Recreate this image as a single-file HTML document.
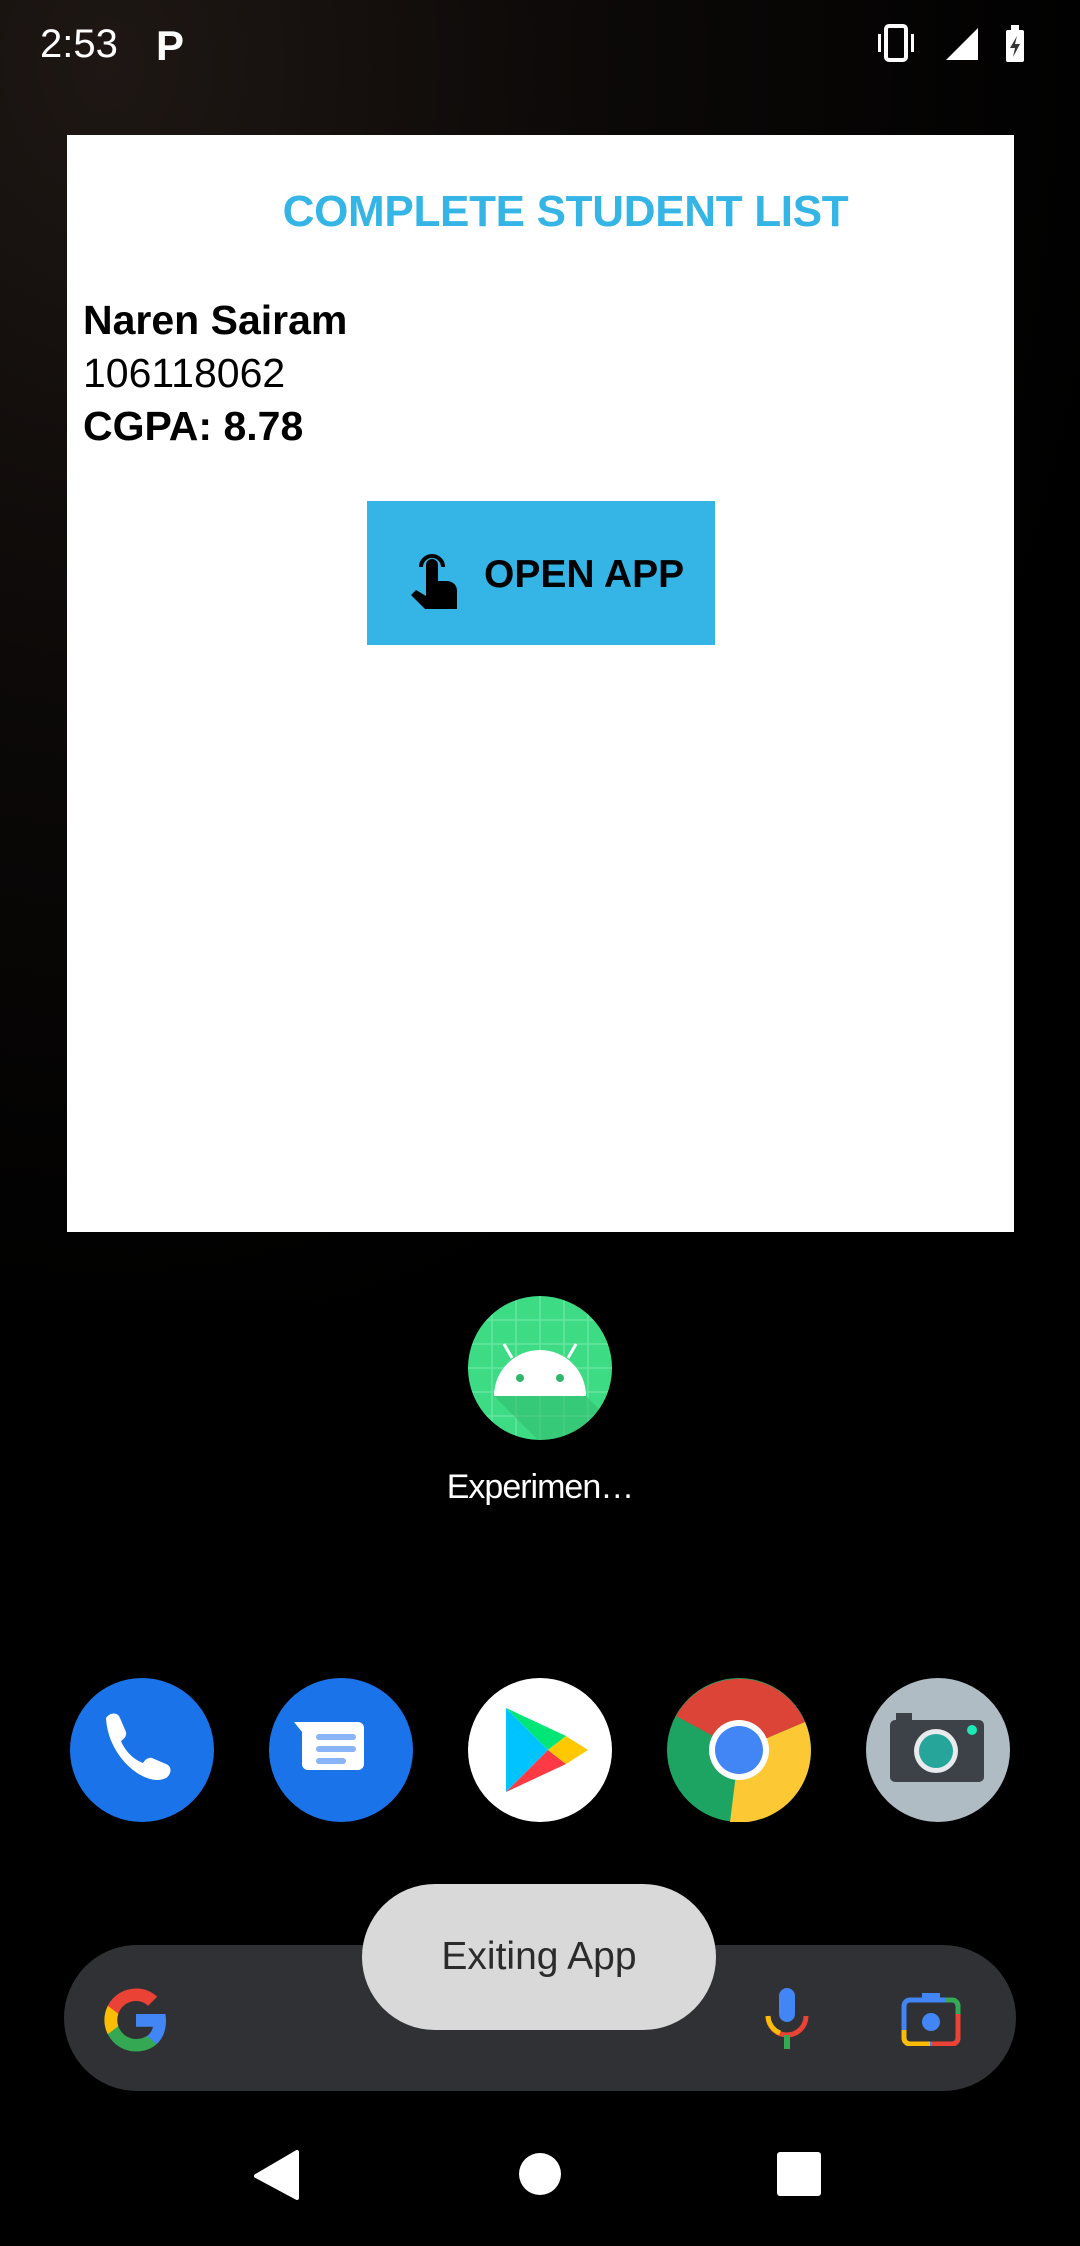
<!DOCTYPE html>
<html><head><meta charset="utf-8"><style>
*{margin:0;padding:0;box-sizing:border-box}
body{width:1080px;height:2246px;background:#000;position:relative;overflow:hidden;font-family:"Liberation Sans",sans-serif}
.bg{position:absolute;left:0;top:0;width:1080px;height:1300px;background:radial-gradient(ellipse at 10% 5%,#1e1714 0%,#0c0908 35%,#000 75%)}
.abs{position:absolute}
.widget{left:67px;top:135px;width:947px;height:1097px;background:#fff}
.title{left:0;width:947px;text-align:center;top:52px;padding-left:50px;color:#35b5e5;font-weight:bold;font-size:44px;letter-spacing:-0.3px}
.t{left:16px;font-size:41px;color:#000}
.btn{left:300px;top:366px;width:348px;height:144px;background:#35b5e5}
</style></head><body>
<div class="bg"></div>
<div class="abs" style="left:40px;top:22px;color:#fff;font-size:40px">2:53</div>
<div class="abs" style="left:156px;top:22px;color:#fff;font-size:42px;font-weight:bold">P</div>
<svg class="abs" style="left:876px;top:22px" width="160" height="44" viewBox="0 0 160 44">
<rect x="10" y="4" width="20" height="34" rx="3" fill="none" stroke="#fff" stroke-width="4"/>
<rect x="2" y="12" width="3" height="18" fill="#fff"/><rect x="35" y="12" width="3" height="18" fill="#fff"/>
<polygon points="70,38 102,38 102,6" fill="#fff"/>
<rect x="130" y="8" width="18" height="32" rx="2" fill="#fff"/><rect x="135" y="3" width="8" height="6" fill="#fff"/>
<polygon points="141,14 134,26 139,26 137,35 144,22 139,22" fill="#333"/>
</svg>
<div class="abs widget">
<div class="abs title">COMPLETE STUDENT LIST</div>
<div class="abs t" style="top:162px;font-weight:bold">Naren Sairam</div>
<div class="abs t" style="top:215px">106118062</div>
<div class="abs t" style="top:268px;font-weight:bold">CGPA: 8.78</div>
<div class="abs btn">
<svg class="abs" style="left:42px;top:42px" width="50" height="66" viewBox="0 0 50 66">
<path d="M12 24a11 11 0 1 1 22 0" fill="none" stroke="#000" stroke-width="4"/>
<path d="M17 22a6 6 0 0 1 12 0v16h8c7 0 11 4 11 10v18H16L2 52l5-5 10 6z" fill="#000"/>
</svg>
<div class="abs" style="left:117px;top:52px;font-size:39px;font-weight:bold;color:#000">OPEN APP</div>
</div>
</div>
<svg class="abs" style="left:468px;top:1296px" width="144" height="144" viewBox="0 0 144 144">
<defs><clipPath id="c"><circle cx="72" cy="72" r="72"/></clipPath></defs>
<circle cx="72" cy="72" r="72" fill="#3ddc84"/>
<g clip-path="url(#c)" stroke="#7be8ad" stroke-width="1.5" opacity=".7">
<path d="M0 24H144M0 48H144M0 72H144M0 96H144M0 120H144M24 0V144M48 0V144M72 0V144M96 0V144M120 0V144"/></g>
<polygon clip-path="url(#c)" points="26,100 118,100 144,126 144,144 70,144" fill="#2fb86c" opacity=".5"/>
<path d="M26 100a46 46 0 0 1 92 0z" fill="#fff"/>
<path d="M44 62l-8-14M100 62l8-14" stroke="#fff" stroke-width="3"/>
<circle cx="52" cy="82" r="4" fill="#2fb86c"/><circle cx="92" cy="82" r="4" fill="#2fb86c"/>
</svg>
<div class="abs" style="left:0;width:1080px;text-align:center;top:1468px;color:#fff;font-size:34px;letter-spacing:-1px">Experimen…</div>
<svg class="abs" style="left:70px;top:1678px" width="944" height="144" viewBox="0 0 944 144">
<circle cx="72" cy="72" r="72" fill="#1a73e8"/>
<path d="M36 40c4-6 12-6 14 0l6 14c1 4-2 7-5 9 4 10 12 18 22 22 2-3 5-6 9-5l14 6c6 2 6 10 0 14-20 10-58-20-60-60z" fill="#fff"/>
<circle cx="271" cy="72" r="72" fill="#1a73e8"/>
<path d="M224 44h64a6 6 0 0 1 6 6v36a6 6 0 0 1-6 6h-50a6 6 0 0 1-6-6v-32z" fill="#fff"/>
<rect x="246" y="56" width="40" height="6" rx="3" fill="#8ab4f8"/><rect x="246" y="68" width="40" height="6" rx="3" fill="#8ab4f8"/><rect x="246" y="80" width="30" height="6" rx="3" fill="#8ab4f8"/>
<circle cx="470" cy="72" r="72" fill="#fff"/>
<polygon points="436,30 436,114 478,72" fill="#00c3ff"/>
<polygon points="436,30 478,72 496,58" fill="#00e676"/>
<polygon points="436,114 478,72 496,86" fill="#ff3a44"/>
<polygon points="478,72 496,58 518,72 496,86" fill="#ffc800"/>
<circle cx="669" cy="72" r="72" fill="#1da462"/>
<path d="M669 72L606 38A72 72 0 0 1 735 44z" fill="#db4437"/>
<path d="M669 72L735 44A72 72 0 0 1 660 144z" fill="#fcc934"/>
<circle cx="669" cy="72" r="30" fill="#fff"/><circle cx="669" cy="72" r="24" fill="#4285f4"/>
<circle cx="868" cy="72" r="72" fill="#b0bcc3"/>
<rect x="820" y="42" width="94" height="62" rx="5" fill="#3c4248"/><rect x="826" y="35" width="16" height="8" fill="#3c4248"/>
<circle cx="866" cy="73" r="22" fill="#e8eaed"/><circle cx="866" cy="73" r="17" fill="#26a69a"/>
<circle cx="902" cy="52" r="5" fill="#1de9b6"/>
</svg>
<div class="abs" style="left:64px;top:1945px;width:952px;height:146px;border-radius:73px;background:#2f3134"></div>
<svg class="abs" style="left:100px;top:1984px" width="72" height="72" viewBox="0 0 48 48">
<path d="M44 24.5c0-1.5-.1-3-.4-4.5H24v8.5h11.3a9.6 9.6 0 0 1-4.2 6.3v5.2h6.8c4-3.7 6.1-9.1 6.1-15.5z" fill="#4285f4"/>
<path d="M24 45c5.7 0 10.5-1.9 13.9-5.1l-6.8-5.2c-1.9 1.3-4.3 2-7.1 2-5.5 0-10.1-3.7-11.8-8.6H5.2v5.4A21 21 0 0 0 24 45z" fill="#34a853"/>
<path d="M12.2 28.1a12.6 12.6 0 0 1 0-8.2v-5.4h-7a21 21 0 0 0 0 19z" fill="#fbbc05"/>
<path d="M24 11.3c3.1 0 5.9 1.1 8.1 3.2l6-6A20 20 0 0 0 24 3 21 21 0 0 0 5.2 14.5l7 5.4C13.9 15 18.5 11.3 24 11.3z" fill="#ea4335"/>
</svg>
<svg class="abs" style="left:762px;top:1986px" width="50" height="66" viewBox="0 0 50 66">
<rect x="17" y="2" width="16" height="34" rx="8" fill="#4285f4"/>
<path d="M6 30a19 19 0 0 0 38 0" fill="none" stroke="#ea4335" stroke-width="5"/>
<path d="M6 30a19 19 0 0 0 12 17" fill="none" stroke="#fbbc05" stroke-width="5"/>
<rect x="22" y="49" width="6" height="14" fill="#34a853"/>
</svg>
<svg class="abs" style="left:900px;top:1990px" width="62" height="56" viewBox="0 0 62 56">
<path d="M4 48V16a6 6 0 0 1 6-6h42a6 6 0 0 1 6 6v32a6 6 0 0 1-6 6H10a6 6 0 0 1-6-6z" fill="none" stroke="#4285f4" stroke-width="5"/>
<path d="M4 40v8a6 6 0 0 0 6 6h20" fill="none" stroke="#fbbc05" stroke-width="5"/>
<path d="M32 54h20a6 6 0 0 0 6-6V24" fill="none" stroke="#ea4335" stroke-width="5"/>
<path d="M46 10h6a6 6 0 0 1 6 6v8" fill="none" stroke="#34a853" stroke-width="5"/>
<rect x="22" y="3" width="18" height="6" fill="#4285f4"/>
<circle cx="31" cy="32" r="9" fill="#4285f4"/>
</svg>
<div class="abs" style="left:362px;top:1884px;width:354px;height:146px;border-radius:73px;background:#d9d9d9;color:#2b2b2b;font-size:39px;text-align:center;line-height:146px">Exiting App</div>
<svg class="abs" style="left:0;top:2140px" width="1080" height="70" viewBox="0 0 1080 70">
<path d="M297 12v46L256 36z" fill="#fff" stroke="#fff" stroke-width="4" stroke-linejoin="round"/>
<circle cx="540" cy="34" r="21" fill="#fff"/>
<rect x="777" y="12" width="44" height="44" rx="3" fill="#fff"/>
</svg>
</body></html>
